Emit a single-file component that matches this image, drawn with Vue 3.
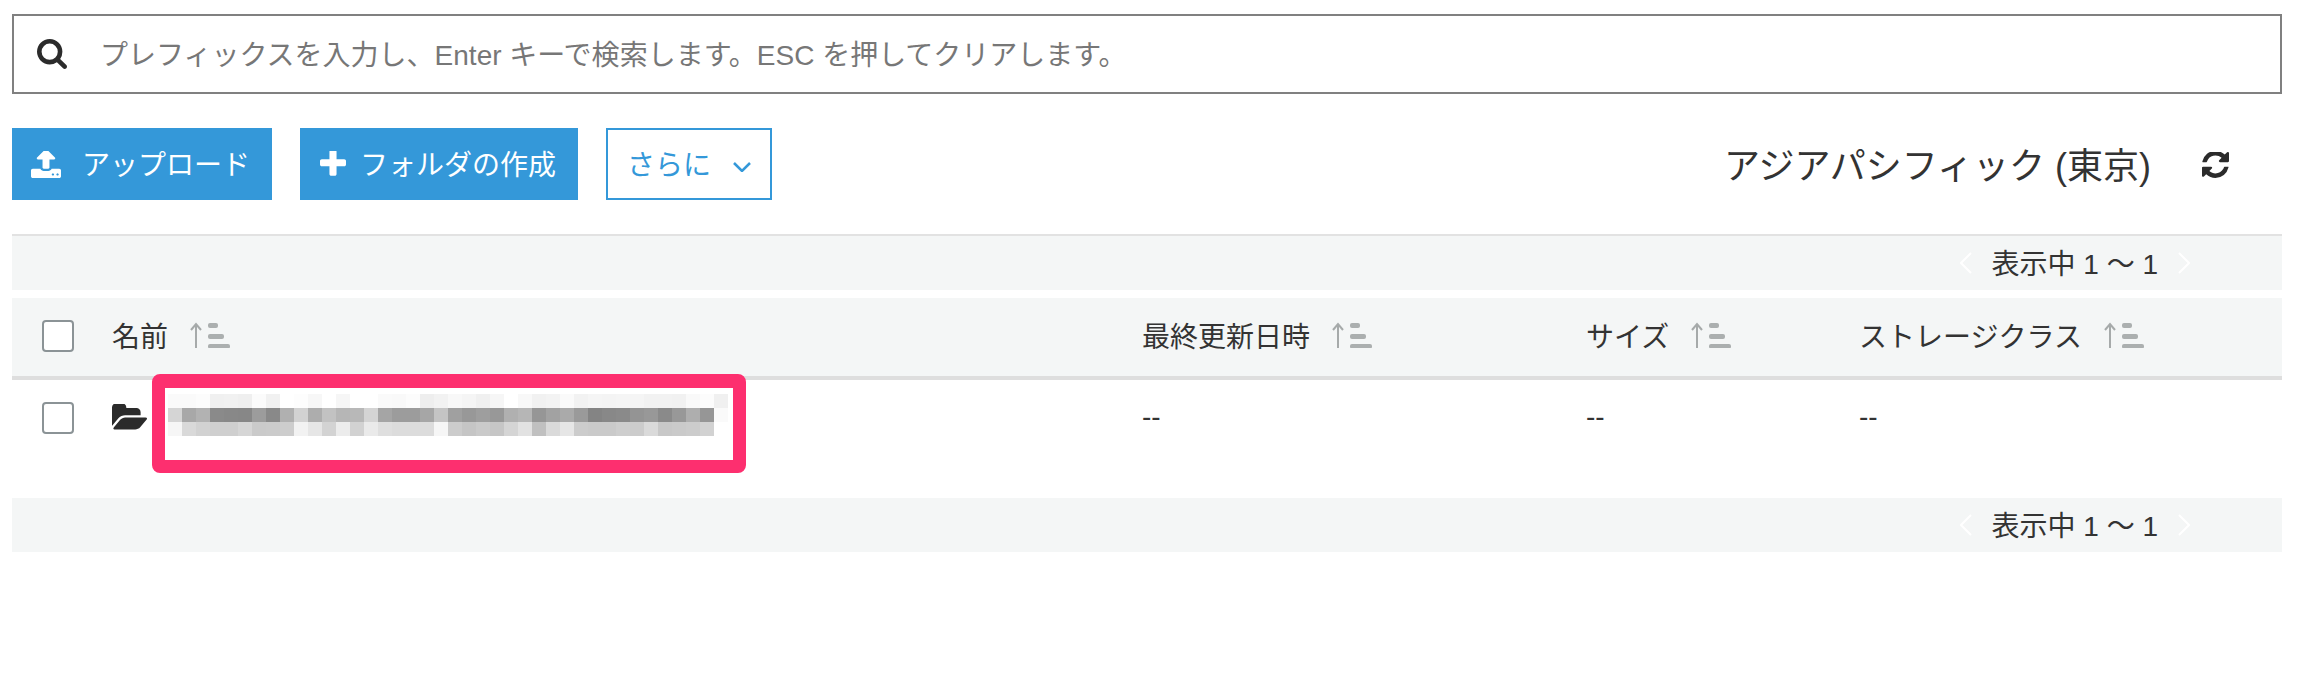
<script setup>
const row1 = 'fa fa fc f0 f1 ef fb f1 ff fd f7 ff f6 ff ff fa f9 fc ee f2 f8 f5 f0 f6 ff f8 f1 f3 fa f2 f5 f4 f5 f5 f2 f2 f1 f9 fc f0'.split(' ')
const row2 = 'd5 a8 b2 8a 88 87 9c 89 b0 d2 ad c2 b6 b8 d4 a5 9c 9c a6 c4 a0 98 9e 98 b0 b6 96 a2 aa 9a 84 88 8a 94 98 8a 98 ae 96 fa'.split(' ')
const row3 = 'f6 d9 d2 cf cf d6 ca cb cd f2 e6 d3 ec d2 ea df dc dc dc f6 cc c5 ca c6 d5 e2 c0 da e6 cc ca ca ce cc da c8 ca cc d2 ff'.split(' ')
const blocks = [...row1, ...row2, ...row3].map((v) => `#${v}${v}${v}`)
const columns = ['最終更新日時', 'サイズ', 'ストレージクラス']
</script>

<template>
  <div class="page">
    <div class="search">
      <svg class="search-icon" viewBox="64 128 1664 1664"><path d="M1216 832q0-185-131.5-316.5t-316.5-131.5-316.5 131.5-131.5 316.5 131.5 316.5 316.5 131.5 316.5-131.5 131.5-316.5zm512 832q0 52-38 90t-90 38q-54 0-90-38l-343-342q-179 124-399 124-143 0-273.5-55.5t-225-150-150-225-55.5-273.5 55.5-273.5 150-225 225-150 273.5-55.5 273.5 55.5 225 150 150 225 55.5 273.5q0 220-124 399l343 343q37 37 37 90z" /></svg>
      <span class="placeholder">プレフィックスを入力し、Enter キーで検索します。ESC を押してクリアします。</span>
    </div>

    <div class="toolbar">
      <button class="btn upload">
        <svg class="upload-icon" viewBox="64 176 1664 1488"><path d="M1344 1472q0-26-19-45t-45-19-45 19-19 45 19 45 45 19 45-19 19-45zm256 0q0-26-19-45t-45-19-45 19-19 45 19 45 45 19 45-19 19-45zm128-224v320q0 40-28 68t-68 28h-1472q-40 0-68-28t-28-68v-320q0-40 28-68t68-28h427q21 56 70.5 92t110.5 36h256q61 0 110.5-36t70.5-92h427q40 0 68 28t28 68zm-325-648q-17 40-59 40h-256v448q0 26-19 45t-45 19h-256q-26 0-45-19t-19-45v-448h-256q-42 0-59-40-17-39 14-69l448-448q18-19 45-19t45 19l448 448q31 30 14 69z" /></svg>
        <span class="btn-text">アップロード</span>
      </button>
      <button class="btn folder">
        <svg class="plus-icon" viewBox="192 192 1408 1408"><path d="M1600 736v192q0 40-28 68t-68 28h-416v416q0 40-28 68t-68 28h-192q-40 0-68-28t-28-68v-416h-416q-40 0-68-28t-28-68v-192q0-40 28-68t68-28h416v-416q0-40 28-68t68-28h192q40 0 68 28t28 68v416h416q40 0 68 28t28 68z" /></svg>
        <span class="btn-text">フォルダの作成</span>
      </button>
      <button class="btn more">
        <span class="btn-text">さらに</span>
        <svg class="more-chevron" viewBox="0 0 18 10"><path d="M1 1l8 8 8-8" /></svg>
      </button>
      <span class="region">アジアパシフィック (東京)</span>
      <svg class="refresh" viewBox="0 64 1536 1536"><path d="M1511 928q0 5-1 7-64 268-268 434.5t-478 166.5q-146 0-282.5-55t-243.5-157l-129 129q-19 19-45 19t-45-19-19-45v-448q0-26 19-45t45-19h448q26 0 45 19t19 45-19 45l-137 137q71 66 161 102t187 36q134 0 250-65t186-179q11-17 53-117 8-23 30-23h192q13 0 22.5 9.5t9.5 22.5zm25-800v448q0 26-19 45t-45 19h-448q-26 0-45-19t-19-45 19-45l138-138q-148-137-349-137-134 0-250 65t-186 179q-11 17-53 117-8 23-30 23h-199q-13 0-22.5-9.5t-9.5-22.5v-7q65-268 270-434.5t480-166.5q146 0 284 55.5t245 156.5l130-129q19-19 45-19t45 19 19 45z" /></svg>
    </div>

    <div class="pager pager-top">
      <svg class="page-chevron" viewBox="0 0 12 22"><path d="M11 1L1 11l10 10" /></svg>
      <span class="page-text">表示中 1 〜 1</span>
      <svg class="page-chevron" viewBox="0 0 12 22"><path d="M1 1l10 10L1 21" /></svg>
    </div>

    <div class="table-head grid">
      <div class="check-cell head-check"><span class="checkbox"></span></div>
      <div class="head-cell">
        名前
        <svg class="sort" viewBox="0 0 42 26"><path class="sort-arrow" d="M7 26V2M2 8l5-6 5 6" /><rect x="19" y="1" width="10" height="5" rx="2" /><rect x="19" y="12" width="16" height="5" rx="2" /><rect x="19" y="22" width="22" height="4.500" rx="2" /></svg>
      </div>
      <div v-for="col in columns" :key="col" class="head-cell">
        {{ col }}
        <svg class="sort" viewBox="0 0 42 26"><path class="sort-arrow" d="M7 26V2M2 8l5-6 5 6" /><rect x="19" y="1" width="10" height="5" rx="2" /><rect x="19" y="12" width="16" height="5" rx="2" /><rect x="19" y="22" width="22" height="4.500" rx="2" /></svg>
      </div>
    </div>

    <div class="table-row grid">
      <div class="check-cell body-check"><span class="checkbox"></span></div>
      <div class="name-cell">
        <svg class="folder-icon" viewBox="0 192 1879 1344"><path d="M1879 952q0 31-31 66l-336 396q-43 51-120.5 86.5t-143.5 35.5h-1088q-34 0-60.5-13t-26.5-43q0-31 31-66l336-396q43-51 120.5-86.5t143.5-35.5h1088q34 0 60.5 13t26.5 43zm-343-344v160h-832q-94 0-197 47.5t-164 119.5l-337 396-5 6q0-4-.5-12.5t-.5-12.5v-960q0-92 66-158t158-66h320q92 0 158 66t66 158v32h544q92 0 158 66t66 158z" /></svg>
        <div class="mosaic">
          <i v-for="(color, i) in blocks" :key="i" :style="{ background: color }"></i>
        </div>
      </div>
      <div class="dash">--</div>
      <div class="dash">--</div>
      <div class="dash">--</div>
      <div class="highlight"></div>
    </div>

    <div class="pager pager-bottom">
      <svg class="page-chevron" viewBox="0 0 12 22"><path d="M11 1L1 11l10 10" /></svg>
      <span class="page-text">表示中 1 〜 1</span>
      <svg class="page-chevron" viewBox="0 0 12 22"><path d="M1 1l10 10L1 21" /></svg>
    </div>
  </div>
</template>

<style scoped>
.page {
  width: 2270px;
  height: 676px;
  padding-top: 14px;
  margin-left: 12px;
  box-sizing: border-box;
  font-family: "Liberation Sans", "Noto Sans CJK JP", sans-serif;
  font-size: 28px;
  color: #333;
}
.search {
  height: 80px;
  box-sizing: border-box;
  border: 2px solid #808080;
  display: flex;
  align-items: center;
  padding-left: 23px;
}
.search-icon {
  width: 30px;
  height: 30px;
  fill: #2b2b2b;
}
.placeholder {
  margin-left: 33px;
  padding-bottom: 3px;
  color: #777;
}
.toolbar {
  margin-top: 34px;
  height: 72px;
  display: flex;
  align-items: center;
}
.btn {
  height: 72px;
  box-sizing: border-box;
  border: 0;
  padding: 0;
  display: flex;
  align-items: center;
  background: #3498d9;
  color: #fff;
  font: inherit;
}
.btn-text {
  padding-bottom: 3px;
}
.upload {
  width: 260px;
  padding-left: 19px;
}
.upload-icon {
  width: 30px;
  height: 27px;
  fill: #fff;
  margin-right: 21px;
}
.folder {
  width: 278px;
  margin-left: 28px;
  padding-left: 20px;
}
.plus-icon {
  width: 26px;
  height: 26px;
  fill: #fff;
  margin-right: 14px;
}
.more {
  width: 166px;
  margin-left: 28px;
  padding-left: 19px;
  background: #fff;
  color: #3498d9;
  border: 2px solid #3498d9;
}
.more-chevron {
  width: 18px;
  height: 10px;
  margin-left: 22px;
  margin-top: 5px;
  fill: none;
  stroke: #3498d9;
  stroke-width: 2.500;
}
.region {
  margin-left: auto;
  padding-bottom: 3px;
  font-size: 36px;
}
.refresh {
  width: 27px;
  height: 27px;
  margin-top: 3px;
  margin-left: 51px;
  margin-right: 53px;
  fill: #2b2b2b;
}
.pager {
  display: flex;
  align-items: center;
  justify-content: flex-end;
  background: #f4f6f6;
  padding-right: 92px;
}
.pager-top {
  margin-top: 34px;
  height: 56px;
  box-sizing: border-box;
  border-top: 2px solid #e2e2e2;
}
.pager-bottom {
  height: 54px;
}
.page-text {
  margin: 0 20px;
  padding-bottom: 3px;
}
.page-chevron {
  width: 12px;
  height: 22px;
  fill: none;
  stroke: #fff;
  stroke-width: 2;
}
.grid {
  display: grid;
  grid-template-columns: 100px 1030px 444px 273px 1fr;
}
.table-head {
  margin-top: 8px;
  height: 82px;
  box-sizing: border-box;
  background: #f4f6f6;
  border-bottom: 4px solid #dedede;
  align-items: center;
}
.check-cell {
  padding-left: 30px;
  display: flex;
}
.head-check {
  padding-bottom: 2px;
}
.checkbox {
  width: 32px;
  height: 32px;
  box-sizing: border-box;
  border: 2px solid #8b9396;
  border-radius: 4px;
  background: #fff;
}
.head-cell {
  display: flex;
  align-items: center;
  padding-bottom: 4px;
}
.sort {
  width: 42px;
  height: 26px;
  margin-left: 21px;
  fill: #abafaf;
}
.sort-arrow {
  fill: none;
  stroke: #a6aaaa;
  stroke-width: 2;
}
.table-row {
  position: relative;
  height: 118px;
  box-sizing: border-box;
  padding-top: 14px;
  align-items: start;
}
.body-check {
  margin-top: 8px;
}
.name-cell {
  display: flex;
  align-items: flex-start;
}
.folder-icon {
  width: 35px;
  height: 26px;
  margin-top: 10px;
  fill: #2b2b2b;
}
.mosaic {
  margin-left: 21px;
  display: grid;
  grid-template-columns: repeat(40, 14px);
  grid-auto-rows: 14px;
}
.dash {
  line-height: 36px;
  margin-top: 5px;
}
.highlight {
  position: absolute;
  left: 140px;
  top: -6px;
  width: 594px;
  height: 99px;
  box-sizing: border-box;
  border: 13px solid #fd2f6f;
  border-top-width: 14px;
  border-radius: 8px;
}
</style>
